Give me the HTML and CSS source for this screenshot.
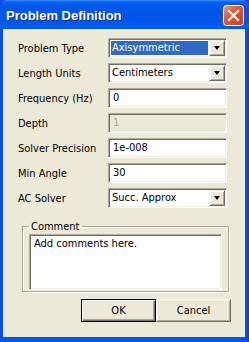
FILE: index.html
```html
<!DOCTYPE html>
<html>
<head>
<meta charset="utf-8">
<link rel="stylesheet" href="styles.css">
</head>
<body>
<div class="window">
  <div class="titlebar">
    <span class="title">Problem Definition</span>
    <div class="close">
      <svg width="21" height="21" viewBox="0 0 21 21">
        <defs>
          <linearGradient id="cg" x1="0" y1="0" x2="1" y2="1">
            <stop offset="0" stop-color="#f0a080"/>
            <stop offset="0.35" stop-color="#e2603b"/>
            <stop offset="1" stop-color="#c8391a"/>
          </linearGradient>
        </defs>
        <rect x="0.5" y="0.5" width="20" height="20" rx="3" fill="url(#cg)" stroke="#ffffff"/>
        <path d="M6 6 L15 15 M15 6 L6 15" stroke="#ffffff" stroke-width="2.2" stroke-linecap="square"/>
      </svg>
    </div>
  </div>
  <div class="client">
    <div class="form">
      <span class="label">Problem Type</span>
      <div class="combo"><span class="value selected">Axisymmetric</span><span class="dropbtn"><span class="arrow"></span></span></div>
      <span class="label">Length Units</span>
      <div class="combo"><span class="value">Centimeters</span><span class="dropbtn"><span class="arrow"></span></span></div>
      <span class="label">Frequency (Hz)</span>
      <div class="edit">0</div>
      <span class="label">Depth</span>
      <div class="edit disabled">1</div>
      <span class="label">Solver Precision</span>
      <div class="edit">1e-008</div>
      <span class="label">Min Angle</span>
      <div class="edit">30</div>
      <span class="label">AC Solver</span>
      <div class="combo"><span class="value">Succ. Approx</span><span class="dropbtn"><span class="arrow"></span></span></div>
    </div>
    <fieldset class="group">
      <legend class="legend">Comment</legend>
      <div class="memo">Add comments here.</div>
    </fieldset>
    <div class="buttons">
      <div class="btn default">OK</div>
      <div class="btn">Cancel</div>
    </div>
  </div>
</div>
</body>
</html>
```
FILE: styles.css
```css
html, body {
  margin: 0;
  padding: 0;
  background: #0054e3;
}
.window {
  width: 249px;
  height: 342px;
  display: flex;
  flex-direction: column;
  background: linear-gradient(to right, #0a3bd0 0, #0058ee 1px, #0055e5 3px, #0055e5 245px, #0046d6 248px);
  font-family: "DejaVu Sans Condensed", "Liberation Sans", sans-serif;
  font-size: 11px;
  color: #000;
}
.titlebar {
  height: 29px;
  flex: none;
  display: flex;
  align-items: center;
  justify-content: space-between;
  padding: 0 5px 0 6px;
  box-sizing: border-box;
  background: linear-gradient(to bottom, #3d8ef8 0, #0a62f2 2px, #0058ee 5px, #0054e6 14px, #0055e8 22px, #0060f5 26px, #0053e0 29px);
  border-radius: 7px 7px 0 0;
}
.title {
  color: #fff;
  font-family: "Liberation Sans", sans-serif;
  font-weight: bold;
  font-size: 13px;
  text-shadow: 1px 1px 0 #0a2c8a;
  padding-top: 1px;
}
.close {
  width: 21px;
  height: 21px;
  margin-top: 2px;
}
.close svg {
  display: block;
}
.client {
  flex: 1;
  margin: 0 4px 5px 3px;
  background: #ece9d8;
  display: flex;
  flex-direction: column;
}
.form {
  display: grid;
  grid-template-columns: 90px 119px;
  grid-auto-rows: 20px;
  row-gap: 5px;
  padding: 9px 0 0 15px;
  align-items: center;
}
.label {
  white-space: nowrap;
}
.combo, .edit {
  height: 20px;
  box-sizing: border-box;
  background: #fff;
  border: 1px solid;
  border-color: #aca899 #fff #fff #aca899;
  box-shadow: inset 1px 1px 0 #716f64, inset -1px -1px 0 #f1efe2;
}
.combo {
  display: flex;
  padding: 1px;
}
.value {
  flex: 1;
  margin: 1px;
  padding-left: 1px;
  line-height: 14px;
  white-space: nowrap;
}
.value.selected {
  background: #316ac5;
  color: #fff;
}
.dropbtn {
  width: 16px;
  flex: none;
  box-sizing: border-box;
  background: #ece9d8;
  border: 1px solid;
  border-color: #f1efe2 #716f64 #716f64 #f1efe2;
  box-shadow: inset 1px 1px 0 #fff, inset -1px -1px 0 #aca899;
  display: flex;
  align-items: center;
  justify-content: center;
}
.arrow {
  width: 0;
  height: 0;
  border-left: 3.5px solid transparent;
  border-right: 3.5px solid transparent;
  border-top: 4px solid #000;
}
.edit {
  padding: 0 0 0 4px;
  line-height: 17px;
}
.edit.disabled {
  background: #ece9d8;
  color: #aca899;
}
.group {
  margin: 12px 0 0 19px;
  padding: 0 6px 6px 6px;
  width: 207px;
  height: 72px;
  box-sizing: border-box;
  border: 1px solid #aca899;
  box-shadow: inset 1px 1px 0 #fff, 1px 1px 0 #fff;
  position: relative;
}
.legend {
  padding: 0 2px;
  margin-left: 0;
  line-height: 13px;
}
.memo {
  height: 56px;
  margin-top: 1px;
  box-sizing: border-box;
  background: #fff;
  border: 1px solid;
  border-color: #aca899 #fff #fff #aca899;
  box-shadow: inset 1px 1px 0 #716f64, inset -1px -1px 0 #f1efe2;
  padding: 2px 4px;
  line-height: 14px;
}
.buttons {
  display: flex;
  justify-content: flex-end;
  padding: 7px 14px 0 0;
}
.btn {
  width: 75px;
  height: 23px;
  box-sizing: border-box;
  background: #ece9d8;
  border: 1px solid;
  border-color: #fff #716f64 #716f64 #fff;
  box-shadow: inset 1px 1px 0 #f1efe2, inset -1px -1px 0 #aca899;
  display: flex;
  align-items: center;
  justify-content: center;
}
.btn.default {
  border: 1px solid #000;
  box-shadow: inset 1px 1px 0 #fff, inset -1px -1px 0 #716f64, inset -2px -2px 0 #aca899;
}
```
